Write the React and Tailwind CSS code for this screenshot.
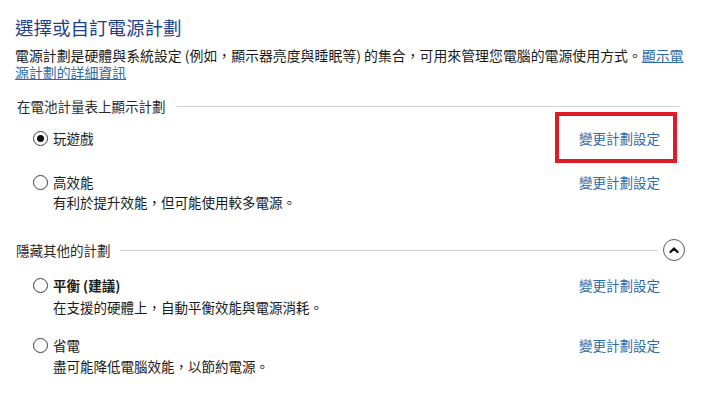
import React from "react";

const font = { fontFamily: "'Noto Sans CJK TC', 'Noto Sans', sans-serif" };

function Radio({ checked }) {
  return (
    <div className="w-[15px] h-[15px] rounded-full border border-[#3c3c3c] bg-white flex items-center justify-center shrink-0">
      {checked && <div className="w-[7px] h-[7px] rounded-full bg-[#111]" />}
    </div>
  );
}

function Plan({ name, desc, checked, bold, mt, descMt = "mt-0" }) {
  return (
    <div className={`${mt} pl-[18px] w-[645px]`}>
      <div className="flex items-center h-[20px]">
        <Radio checked={checked} />
        <span className={`ml-[5px] text-[13.5px] leading-[20px] text-[#1a1a1a] ${bold ? "font-bold" : ""}`}>{name}</span>
        <span className="ml-auto text-[13.5px] leading-[20px] text-[#2d6aa8] cursor-pointer">變更計劃設定</span>
      </div>
      {desc && (
        <div className={`${descMt} pl-[20px] h-[20px] text-[13.5px] leading-[20px] text-[#1a1a1a]`}>{desc}</div>
      )}
    </div>
  );
}

export default function App() {
  return (
    <div className="relative w-[720px] h-[418px] bg-white pl-[15px] overflow-hidden" style={font}>
      <h1 className="pt-[15px] h-[39px] text-[18.5px] leading-[24px] font-normal text-[#1f3f8c]">選擇或自訂電源計劃</h1>
      <p className="mt-[8px] text-[13.9px] leading-[17px] text-[#1a1a1a] whitespace-nowrap">
        電源計劃是硬體與系統設定 (例如，顯示器亮度與睡眠等) 的集合，可用來管理您電腦的電源使用方式。
        <span className="text-[#2d6aa8] underline">顯示電<br />源計劃的詳細資訊</span>
      </p>

      <div className="mt-[15px] h-[20px] flex items-center pl-[2px] w-[665px]">
        <span className="text-[13.5px] leading-[20px] text-[#2a2a2a]">在電池計量表上顯示計劃</span>
        <div className="ml-[10px] flex-1 h-px bg-[#d4d4d4]" />
      </div>

      <Plan mt="mt-[12px]" name="玩遊戲" checked />
      <Plan mt="mt-[24px]" name="高效能" desc="有利於提升效能，但可能使用較多電源。" />

      <div className="mt-[27px] h-[22px] flex items-center pl-[1px] w-[670px]">
        <span className="text-[13.5px] leading-[20px] text-[#2a2a2a]">隱藏其他的計劃</span>
        <div className="ml-[9px] flex-1 h-px bg-[#d4d4d4]" />
        <div className="ml-[5px] w-[22px] h-[22px] rounded-full border border-[#5a5a5a] flex items-center justify-center">
          <svg width="14" height="14" viewBox="0 0 14 14">
            <polyline points="3.5,9 7,5.5 10.5,9" fill="none" stroke="#111" strokeWidth="2.4" strokeLinecap="round" strokeLinejoin="round" />
          </svg>
        </div>
      </div>

      <Plan mt="mt-[14px]" name="平衡 (建議)" bold desc="在支援的硬體上，自動平衡效能與電源消耗。" descMt="mt-[2px]" />
      <Plan mt="mt-[18px]" name="省電" desc="盡可能降低電腦效能，以節約電源。" descMt="mt-[1px]" />

      <div className="absolute left-[555px] top-[112px] w-[122px] h-[51px] border-[4px] border-[#e01b24]" />
    </div>
  );
}
